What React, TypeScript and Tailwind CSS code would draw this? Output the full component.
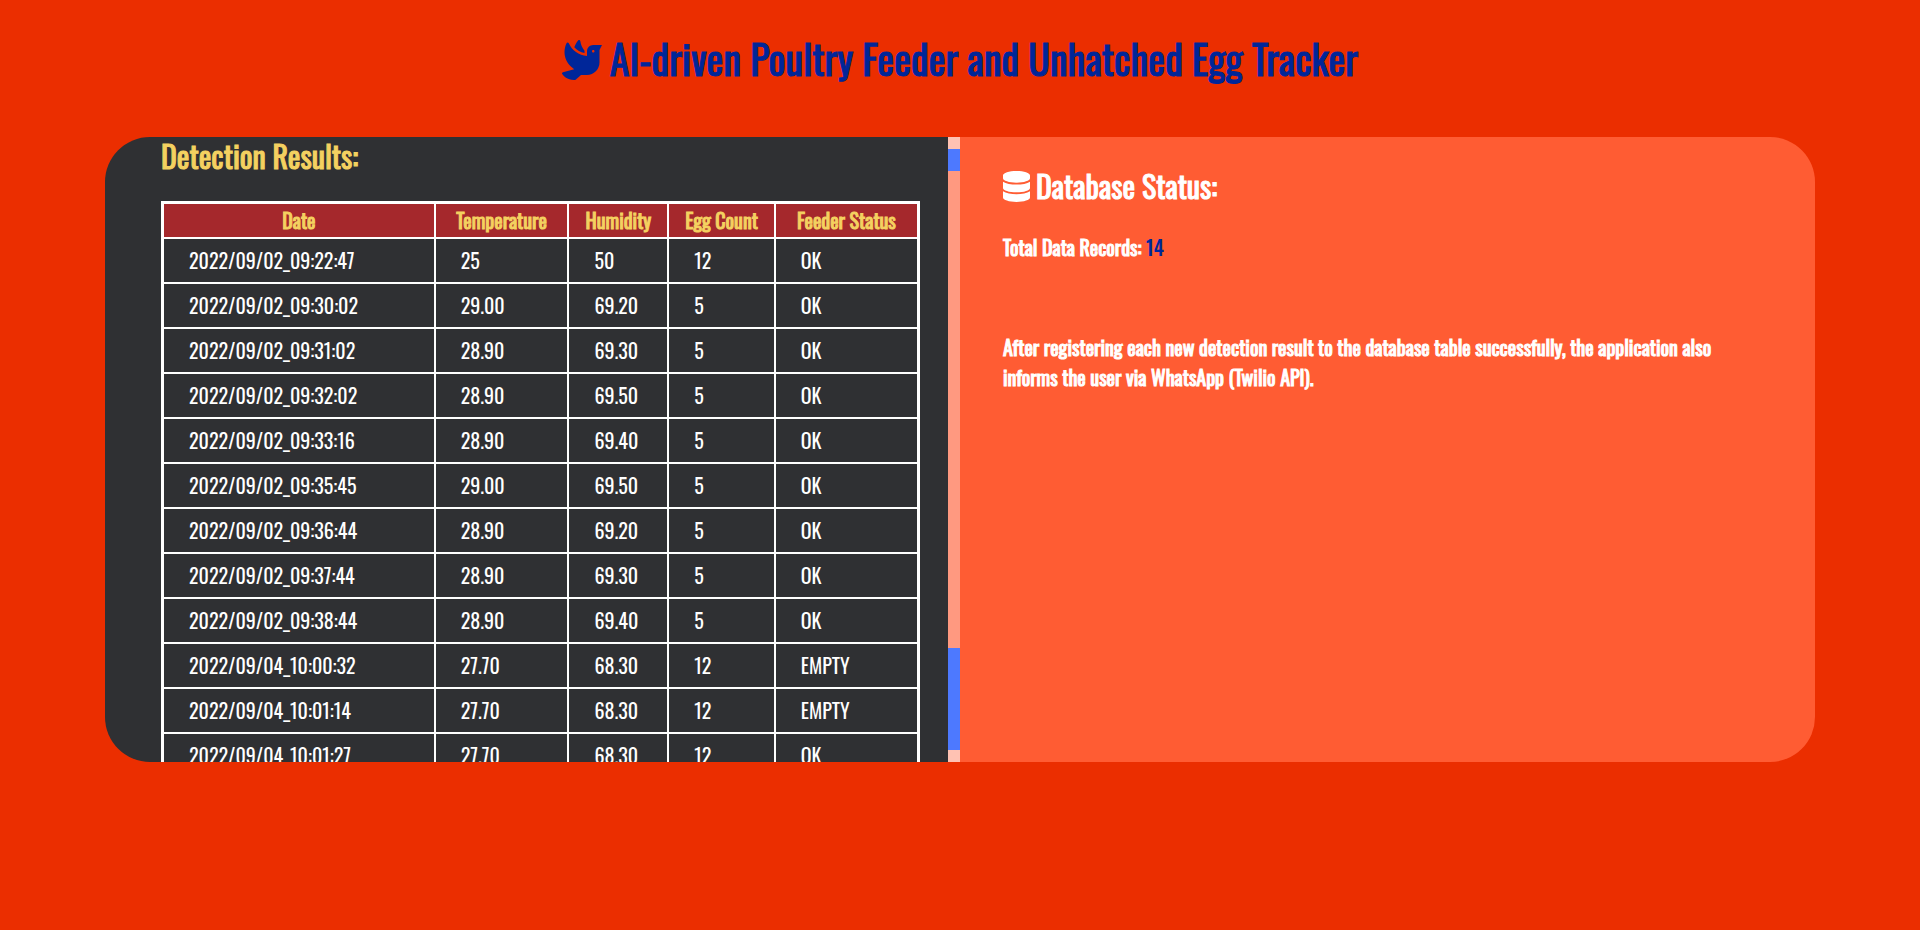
import { FaDatabase, FaDove } from "react-icons/fa";

type Detection = [string, string, string, string, string];

const columns = ["Date", "Temperature", "Humidity", "Egg Count", "Feeder Status"];

const detections: Detection[] = [
  ["2022/09/02_09:22:47", "25", "50", "12", "OK"],
  ["2022/09/02_09:30:02", "29.00", "69.20", "5", "OK"],
  ["2022/09/02_09:31:02", "28.90", "69.30", "5", "OK"],
  ["2022/09/02_09:32:02", "28.90", "69.50", "5", "OK"],
  ["2022/09/02_09:33:16", "28.90", "69.40", "5", "OK"],
  ["2022/09/02_09:35:45", "29.00", "69.50", "5", "OK"],
  ["2022/09/02_09:36:44", "28.90", "69.20", "5", "OK"],
  ["2022/09/02_09:37:44", "28.90", "69.30", "5", "OK"],
  ["2022/09/02_09:38:44", "28.90", "69.40", "5", "OK"],
  ["2022/09/04_10:00:32", "27.70", "68.30", "12", "EMPTY"],
  ["2022/09/04_10:01:14", "27.70", "68.30", "12", "EMPTY"],
  ["2022/09/04_10:01:27", "27.70", "68.30", "12", "OK"],
];

function DetectionTable() {
  return (
    <table className="w-full table-fixed border-collapse border-3 border-white">
      <colgroup>
        <col className="w-[36%]" />
        <col className="w-[17.7%]" />
        <col className="w-[13.2%]" />
        <col className="w-[14.1%]" />
        <col className="w-[19%]" />
      </colgroup>
      <thead>
        <tr className="h-[35px] bg-[#a5282c] text-[#f4d160]">
          {columns.map((name) => (
            <th
              key={name}
              scope="col"
              className="border-2 border-white p-0 text-center font-normal [-webkit-text-stroke:1px]"
            >
              {name}
            </th>
          ))}
        </tr>
      </thead>
      <tbody>
        {detections.map((row) => (
          <tr key={row[0]} className="h-[45px] text-white">
            {row.map((value, i) => (
              <td key={columns[i]} className="border-2 border-white py-0 pr-0 pl-[25px]">
                {value}
              </td>
            ))}
          </tr>
        ))}
      </tbody>
    </table>
  );
}

function ScrollRail() {
  return (
    <div aria-hidden="true" className="flex w-3 shrink-0 flex-col bg-[#ff9980]">
      <div className="h-3 bg-[#ffc2b3]" />
      <div className="h-[22px] bg-[#4d79ff]" />
      <div className="flex-1" />
      <div className="h-[102px] bg-[#4d79ff]" />
      <div className="h-3 bg-[#ffc2b3]" />
    </div>
  );
}

export default function App() {
  return (
    <div className="min-h-screen bg-[#eb2e00] font-['Oswald','Liberation_Sans_Narrow',sans-serif] text-[20px] leading-[30px]">
      <header className="flex h-[137px] items-start justify-center pt-7">
        <h1 className="flex items-center gap-2 text-[40px] leading-[60px] font-normal text-[#002699] [-webkit-text-stroke:1px]">
          <FaDove className="mt-1 size-10 [stroke-width:0]" />
          AI-driven Poultry Feeder and Unhatched Egg Tracker
        </h1>
      </header>

      <main className="mx-[105px] flex h-[625px] overflow-hidden rounded-[45px]">
        <section className="flex w-1/2 bg-[#2f3033]">
          <div className="h-full flex-1 overflow-hidden pr-7 pl-14">
            <h2 className="mb-6 h-[40px] text-[30px] leading-[38px] font-normal text-[#f4d160] [-webkit-text-stroke:1px]">
              Detection Results:
            </h2>
            <DetectionTable />
          </div>
          <ScrollRail />
        </section>

        <section className="w-1/2 bg-[#ff5c33] pt-7 pr-[86px] pl-[43px] font-normal text-white [-webkit-text-stroke:1px]">
          <h2 className="flex items-center gap-1.5 text-[30px] leading-[42px]">
            <FaDatabase className="h-[31px] w-[27px] [stroke-width:0]" />
            Database Status:
          </h2>
          <p className="mt-[25px]">
            Total Data Records: <span className="font-medium text-[#002699] [-webkit-text-stroke:0px]">14</span>
          </p>
          <p className="mt-[70px]">
            After registering each new detection result to the database table successfully, the application also
            informs the user via WhatsApp (Twilio API).
          </p>
        </section>
      </main>
    </div>
  );
}
